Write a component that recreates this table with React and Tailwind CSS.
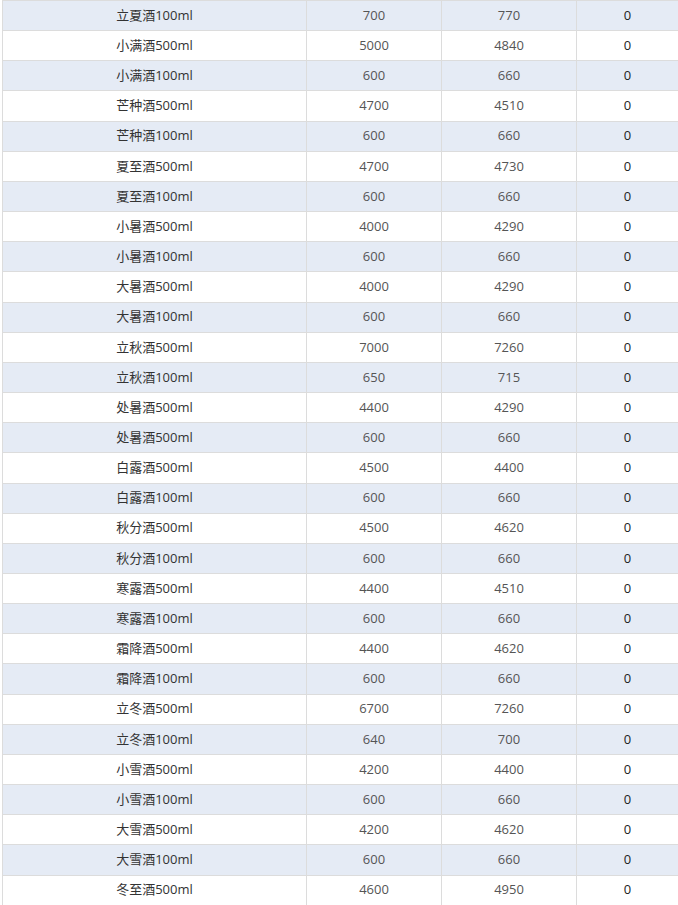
const rows = [
  ['立夏酒100ml', 700, 770, 0],
  ['小满酒500ml', 5000, 4840, 0],
  ['小满酒100ml', 600, 660, 0],
  ['芒种酒500ml', 4700, 4510, 0],
  ['芒种酒100ml', 600, 660, 0],
  ['夏至酒500ml', 4700, 4730, 0],
  ['夏至酒100ml', 600, 660, 0],
  ['小暑酒500ml', 4000, 4290, 0],
  ['小暑酒100ml', 600, 660, 0],
  ['大暑酒500ml', 4000, 4290, 0],
  ['大暑酒100ml', 600, 660, 0],
  ['立秋酒500ml', 7000, 7260, 0],
  ['立秋酒100ml', 650, 715, 0],
  ['处暑酒500ml', 4400, 4290, 0],
  ['处暑酒500ml', 600, 660, 0],
  ['白露酒500ml', 4500, 4400, 0],
  ['白露酒100ml', 600, 660, 0],
  ['秋分酒500ml', 4500, 4620, 0],
  ['秋分酒100ml', 600, 660, 0],
  ['寒露酒500ml', 4400, 4510, 0],
  ['寒露酒100ml', 600, 660, 0],
  ['霜降酒500ml', 4400, 4620, 0],
  ['霜降酒100ml', 600, 660, 0],
  ['立冬酒500ml', 6700, 7260, 0],
  ['立冬酒100ml', 640, 700, 0],
  ['小雪酒500ml', 4200, 4400, 0],
  ['小雪酒100ml', 600, 660, 0],
  ['大雪酒500ml', 4200, 4620, 0],
  ['大雪酒100ml', 600, 660, 0],
  ['冬至酒500ml', 4600, 4950, 0],
];

export default function App() {
  return (
    <div className="w-[678px] h-[905px] overflow-hidden bg-white pl-[2px] font-['Open_Sans','Noto_Sans_CJK_SC',sans-serif] text-[13px]">
      <div className="border-l border-[#dcdcdc]">
        {rows.map((r, i) => (
          <div
            key={i}
            className={`grid grid-cols-[304px_135px_135px_1fr] h-[30.17px] border-t border-[#dcdcdc] ${i % 2 === 0 ? 'bg-[#e5ebf5]' : 'bg-white'}`}
          >
            <div className="flex items-center justify-center border-r border-[#dcdcdc] text-[#333]">{r[0]}</div>
            <div className="flex items-center justify-center border-r border-[#dcdcdc] text-[#555]">{r[1]}</div>
            <div className="flex items-center justify-center border-r border-[#dcdcdc] text-[#555]">{r[2]}</div>
            <div className="flex items-center justify-center text-[#222]">{r[3]}</div>
          </div>
        ))}
      </div>
    </div>
  );
}
